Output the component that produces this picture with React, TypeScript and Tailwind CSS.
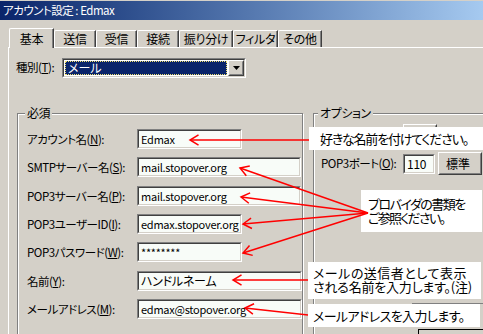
import React from "react";

const F = "font-['Noto_Sans_CJK_JP','Noto_Sans_JP',sans-serif]";

function Sunken({ className, children, textClass = "" }: { className: string; children?: React.ReactNode; textClass?: string }) {
  return (
    <div className={`border border-t-[#808080] border-l-[#808080] border-b-white border-r-white ${className}`}>
      <div className={`h-full border border-t-[#404040] border-l-[#404040] border-b-[#d4d0c8] border-r-[#d4d0c8] bg-[#f8fcf8] pl-[2px] text-[11px] leading-[16px] whitespace-nowrap overflow-hidden tracking-[-0.25px] ${textClass}`}>
        {children}
      </div>
    </div>
  );
}

function Raised({ className, children }: { className: string; children?: React.ReactNode }) {
  return (
    <div className={`border border-t-white border-l-white border-b-[#404040] border-r-[#404040] bg-[#d4d0c8] ${className}`}>
      <div className="h-full border border-t-[#d4d0c8] border-l-[#d4d0c8] border-b-[#808080] border-r-[#808080] flex items-center justify-center">
        {children}
      </div>
    </div>
  );
}

function Tab({ children, w, selected }: { children: React.ReactNode; w: string; selected?: boolean }) {
  return (
    <div
      className={`${w} ${
        selected ? "h-[20px] mb-[-1px] relative z-10 pt-[2px]" : "h-[17px]"
      } border-t border-l border-white rounded-tl-[2px] border-r border-r-[#404040] shadow-[inset_-1px_0_0_#808080] bg-[#d4d0c8] flex justify-center leading-[15px] text-[12px] tracking-[-0.3px]`}
    >
      {children}
    </div>
  );
}

function Group({ label, className, labelClass, children }: { label: string; className: string; labelClass: string; children?: React.ReactNode }) {
  return (
    <div className={`relative border border-[#808080] shadow-[inset_1px_1px_0_#fff,1px_1px_0_#fff] ${className}`}>
      <span className={`absolute top-[-8px] px-[2px] bg-[#d4d0c8] leading-[14px] text-[12px] tracking-[-0.4px] ${labelClass}`}>{label}</span>
      {children}
    </div>
  );
}

function Arrow({ x1, y1, x2, y2 }: { x1: number; y1: number; x2: number; y2: number }) {
  const a = Math.atan2(y1 - y2, x1 - x2);
  const L = 10;
  const s = 0.55;
  const p1 = `${x2 + L * Math.cos(a + s)},${y2 + L * Math.sin(a + s)}`;
  const p2 = `${x2 + L * Math.cos(a - s)},${y2 + L * Math.sin(a - s)}`;
  return (
    <g>
      <line x1={x1} y1={y1} x2={x2} y2={y2} />
      <polyline points={`${p1} ${x2},${y2} ${p2}`} fill="none" />
    </g>
  );
}

function Row({ label, u, rest, children }: { label: string; u: string; rest: string; children: React.ReactNode }) {
  return (
    <div className="flex items-center h-[20px]">
      <span className="w-[110px] whitespace-nowrap leading-[14px] text-[11.5px] tracking-[-0.45px]">
        {label}(<u>{u}</u>){rest}
      </span>
      {children}
    </div>
  );
}

export default function App() {
  return (
    <div className={`relative w-[483px] h-[334px] overflow-hidden bg-[#d4d0c8] text-black text-[12px] ${F} [font-feature-settings:'palt']`}>
      <div className="h-[1px] bg-[#d4d0c8]" />
      <div className="h-[19px] bg-gradient-to-r from-[#0a246a] to-[#a6caf0] text-white pl-[3px] leading-[19px] text-[11.5px] tracking-[-0.5px]">
        アカウント設定 : Edmax
      </div>
      <div className="pt-[8px] pl-[8px]">
        <div className="flex items-end h-[19px] pl-[1px]">
          <Tab selected w="w-[45px]">基本</Tab>
          <Tab w="w-[42px]">送信</Tab>
          <Tab w="w-[41px]">受信</Tab>
          <Tab w="w-[42px]">接続</Tab>
          <Tab w="w-[54px]">振り分け</Tab>
          <Tab w="w-[45px]">フィルタ</Tab>
          <Tab w="w-[44px]">その他</Tab>
        </div>
        <div className="border-t border-l border-white pt-[10px] pl-[7px] h-[290px]">
          <div className="flex items-center h-[20px]">
            <span className="w-[46px] whitespace-nowrap text-[11.5px] tracking-[-0.45px]">
              種別(<u>T</u>):
            </span>
            <div className="w-[184px] h-[20px] border border-t-[#808080] border-l-[#808080] border-b-white border-r-white">
              <div className="h-full border border-t-[#404040] border-l-[#404040] border-b-[#d4d0c8] border-r-[#d4d0c8] bg-white flex">
                <div className="flex-1 m-[1px] bg-[#0a246a] border border-dotted border-[#f0e070] text-white leading-[12px] pl-[2px] text-[12px]">
                  メール
                </div>
                <Raised className="w-[16px] h-[16px]">
                  <svg width="7" height="4" viewBox="0 0 7 4">
                    <path d="M0 0H7L3.5 4Z" fill="#000" />
                  </svg>
                </Raised>
              </div>
            </div>
          </div>
          <div className="flex mt-[35px] ml-[1px] items-start">
            <Group label="必須" labelClass="left-[7px]" className="w-[295px] h-[240px]">
              <div className="pt-[15px] pl-[9px] flex flex-col gap-[8.33px]">
                <Row label="アカウント名" u="N" rest=":">
                  <Sunken className="w-[105px] h-[20px]">Edmax</Sunken>
                </Row>
                <Row label="SMTPサーバー名" u="S" rest=":">
                  <Sunken className="w-[164px] h-[20px]">mail.stopover.org</Sunken>
                </Row>
                <Row label="POP3サーバー名" u="P" rest=":">
                  <Sunken className="w-[164px] h-[20px]">mail.stopover.org</Sunken>
                </Row>
                <Row label="POP3ユーザーID" u="I" rest=":">
                  <Sunken className="w-[105px] h-[20px]">edmax.stopover.org</Sunken>
                </Row>
                <Row label="POP3パスワード" u="W" rest=":">
                  <Sunken className="w-[105px] h-[20px]">********</Sunken>
                </Row>
                <Row label="名前" u="Y" rest=":">
                  <Sunken className="w-[165px] h-[20px]" textClass="text-[12px]">ハンドルネーム</Sunken>
                </Row>
                <Row label="メールアドレス" u="M" rest=":">
                  <Sunken className="w-[165px] h-[20px]">edmax@stopover.org</Sunken>
                </Row>
              </div>
            </Group>
            <Group label="オプション" labelClass="left-[4px]" className="ml-[10px] w-[200px] h-[240px]">
              <div className="pt-[10px] pl-[7px] flex flex-col">
                <Raised className="ml-[82px] w-[34px] h-[22px]" />
                <div className="flex items-center mt-[6px] h-[23px]">
                  <span className="w-[82px] whitespace-nowrap text-[11.5px] tracking-[-0.45px]">
                    POP3ポート(<u>O</u>):
                  </span>
                  <Sunken className="w-[32px] h-[20px]" textClass="text-[12px]">110</Sunken>
                  <Raised className="ml-[3px] w-[44px] h-[23px]">
                    <span className="text-[12px] leading-[14px] pr-[4px]">標準</span>
                  </Raised>
                </div>
                <div className="ml-[91px] mt-[128px] w-[80px] h-[22px] border-t border-l border-[#808080]" />
                <div className="ml-[97px] mt-[4px] w-[70px] h-[23px] border border-black bg-[#d4d0c8]" />
              </div>
            </Group>
          </div>
        </div>
      </div>

      {/* callouts */}
      <div className="absolute left-[309px] top-[127px] w-[174px] h-[23px] bg-white pl-[11px] text-[13px] leading-[23px] whitespace-nowrap tracking-[-1.2px]">
        好きな名前を付けてください。
      </div>
      <div className="absolute left-[361px] top-[190px] w-[121px] h-[42px] bg-white pl-[7px] pt-[7px] text-[13px] leading-[14px] whitespace-nowrap">
        <div className="tracking-[-1.5px]">プロバイダの書類を</div>
        <div className="tracking-[-1.7px]">ご参照ください。</div>
      </div>
      <div className="absolute left-[308px] top-[262px] w-[173px] h-[37px] bg-white pl-[5px] pt-[4px] text-[13px] leading-[14px] whitespace-nowrap">
        <div className="tracking-[0.5px]">メールの送信者として表示</div>
        <div className="tracking-[-0.2px]">される名前を入力します。(注)</div>
      </div>
      <div className="absolute left-[308px] top-[304px] w-[172px] h-[23px] bg-white pl-[5px] text-[13px] leading-[23px] whitespace-nowrap tracking-[-0.6px]">
        メールアドレスを入力します。
      </div>

      <svg className="absolute inset-0 pointer-events-none" width="483" height="334" viewBox="0 0 483 334" stroke="#ff0000" strokeWidth="1.5">
        <Arrow x1={309} y1={140} x2={190} y2={140} />
        <Arrow x1={368} y1={213} x2={240} y2={168} />
        <Arrow x1={368} y1={213} x2={241} y2={197} />
        <Arrow x1={368} y1={213} x2={243} y2={224} />
        <Arrow x1={368} y1={213} x2={243} y2={253} />
        <Arrow x1={308} y1={280} x2={233} y2={280} />
        <Arrow x1={308} y1={315} x2={245} y2={308} />
      </svg>
    </div>
  );
}
